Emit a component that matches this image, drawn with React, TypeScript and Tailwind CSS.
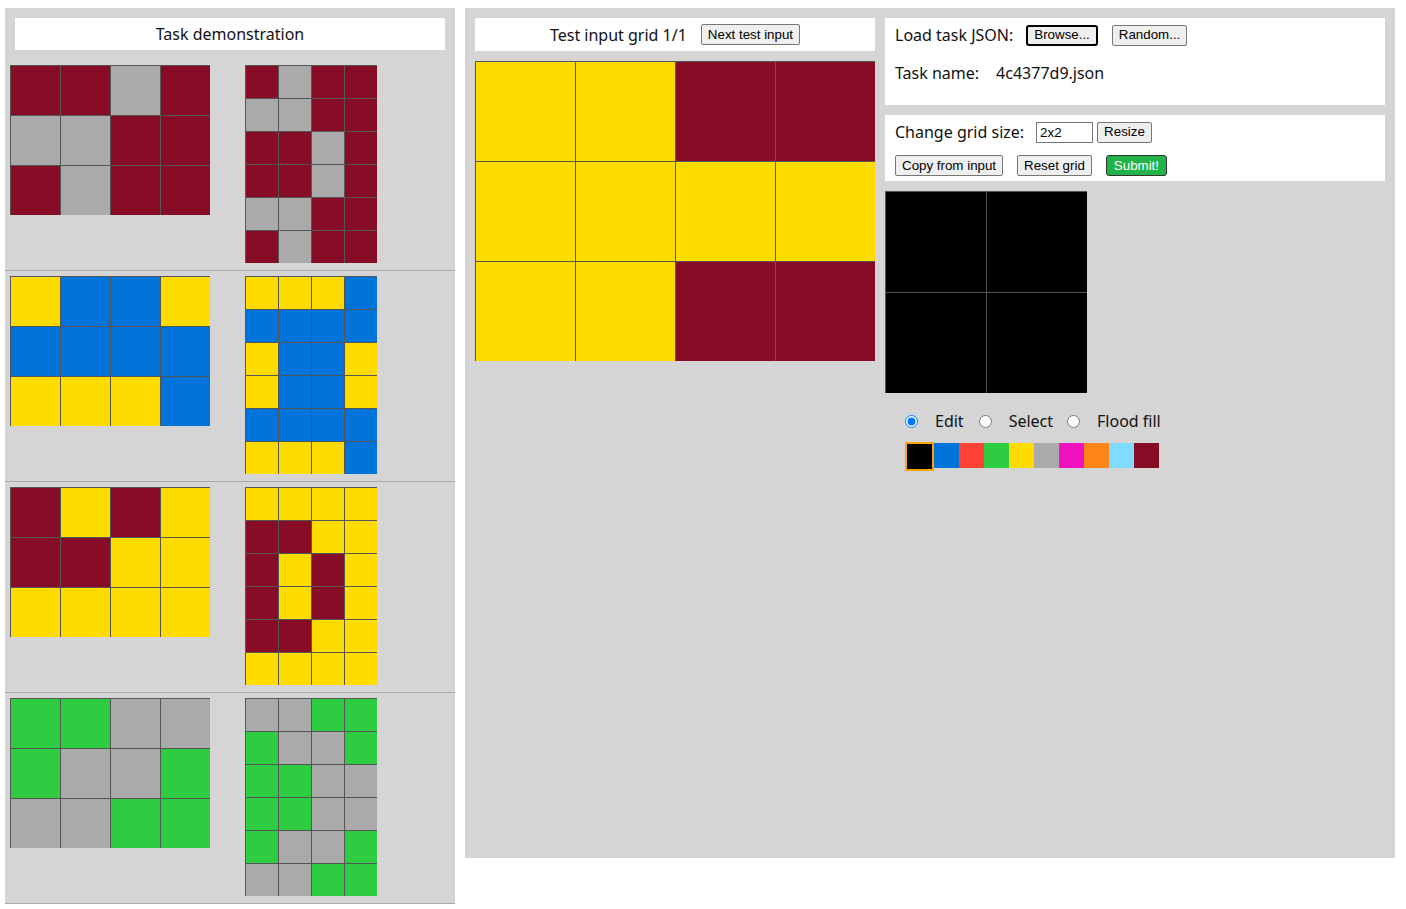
import React from "react";

const C: Record<string, string> = {
  K: "#000000",
  B: "#0074D9",
  R: "#FF4136",
  G: "#2ECC40",
  Y: "#FFDC00",
  A: "#AAAAAA",
  P: "#F012BE",
  O: "#FF851B",
  L: "#7FDBFF",
  M: "#870C25",
};

function flipThen(rows: string[]): string[] {
  return [...rows].reverse().concat(rows);
}

const demo: string[][] = [
  ["MMAM", "AAMM", "MAMM"],
  ["YBBY", "BBBB", "YYYB"],
  ["MYMY", "MMYY", "YYYY"],
  ["GGAA", "GAAG", "AAGG"],
];

function Grid({ rows, size }: { rows: string[]; size: number }) {
  return (
    <div className="flex flex-col">
      {rows.map((row, i) => (
        <div key={i} className="flex">
          {row.split("").map((c, j) => (
            <div
              key={j}
              className="box-border border-l border-t border-[#555555]"
              style={{ width: size, height: size, backgroundColor: C[c] }}
            />
          ))}
        </div>
      ))}
    </div>
  );
}

const btnFont = { fontFamily: '"Liberation Sans", Arial, sans-serif' };
const btn =
  "h-[21px] px-[6px] bg-[#efefef] border border-[#767676] rounded-[2px] text-[13.333px] leading-none text-black flex items-center";

export default function App() {
  return (
    <div
      className="flex items-start gap-[10px] pt-[8px] pl-[5px] bg-white min-h-[909px] text-[#111]"
      style={{ fontFamily: '"Noto Sans", sans-serif' }}
    >
      {/* Left panel */}
      <div className="w-[450px] bg-[#d5d5d5] pt-[10px] flex flex-col">
        <div className="mx-[10px] h-[32px] bg-white flex items-center justify-center text-[16px]">
          Task demonstration
        </div>
        <div className="mt-[10px] flex flex-col">
          {demo.map((inp, i) => (
            <div
              key={i}
              className="flex items-start pl-[5px] pt-[5px] pb-[7px] border-b border-[#aaaaaa] h-[211px] box-border"
            >
              <div className="w-[235px]">
                <Grid rows={inp} size={50} />
              </div>
              <Grid rows={flipThen(inp)} size={33} />
            </div>
          ))}
        </div>
      </div>

      {/* Right panel */}
      <div className="w-[930px] h-[850px] bg-[#d5d5d5] p-[10px] flex gap-[10px] items-start">
        <div className="w-[400px] flex flex-col gap-[10px]">
          <div className="h-[33px] bg-white flex items-center justify-center text-[16px]">
            <span>Test input grid 1/1</span>
            <button className={btn + " ml-[14px]"} style={btnFont}>
              Next test input
            </button>
          </div>
          <Grid rows={["YYMM", "YYYY", "YYMM"]} size={100} />
        </div>

        <div className="w-[500px] flex flex-col">
          <div className="h-[87px] bg-white pl-[10px] flex flex-col text-[16px]">
            <div className="flex items-center h-[24px] mt-[5px]">
              <span>Load task JSON:</span>
              <button
                className="ml-[13px] h-[21px] px-[6px] bg-[#efefef] border-2 border-black rounded-[3px] text-[13.333px] leading-none text-black flex items-center"
                style={btnFont}
              >
                Browse...
              </button>
              <button className={btn + " ml-[14px]"} style={btnFont}>
                Random...
              </button>
            </div>
            <div className="flex items-center h-[24px] mt-[14px]">
              <span>Task name:</span>
              <span className="ml-[17px]">4c4377d9.json</span>
            </div>
          </div>

          <div className="mt-[10px] h-[66px] bg-white pl-[10px] flex flex-col text-[16px]">
            <div className="flex items-center h-[24px] mt-[5px]">
              <span>Change grid size:</span>
              <input
                defaultValue="2x2"
                className="ml-[12px] w-[57px] h-[21px] border border-[#767676] px-[3px] text-[13.333px] text-black bg-white outline-none"
                style={btnFont}
              />
              <button className={btn + " ml-[4px]"} style={btnFont}>
                Resize
              </button>
            </div>
            <div className="flex items-center h-[21px] mt-[11px]">
              <button className={btn} style={btnFont}>
                Copy from input
              </button>
              <button className={btn + " ml-[14px]"} style={btnFont}>
                Reset grid
              </button>
              <button
                className="ml-[14px] h-[21px] px-[7px] bg-[#21b248] border border-[#333333] rounded-[3px] text-[13.333px] leading-none text-white flex items-center"
                style={btnFont}
              >
                Submit!
              </button>
            </div>
          </div>

          <div className="mt-[10px]">
            <Grid rows={["KK", "KK"]} size={101} />
          </div>

          <div className="mt-[20px] pl-[20px] flex items-center h-[16px] text-[16px]">
            <input type="radio" name="mode" defaultChecked className="m-0 w-[13px] h-[13px]" />
            <span className="ml-[17px]">Edit</span>
            <input type="radio" name="mode" className="ml-[15px] m-0 w-[13px] h-[13px]" />
            <span className="ml-[17px]">Select</span>
            <input type="radio" name="mode" className="ml-[14px] m-0 w-[13px] h-[13px]" />
            <span className="ml-[17px]">Flood fill</span>
          </div>

          <div className="mt-[13px] pl-[20px] flex items-start">
            <div className="w-[29px] h-[29px] border-[2px] border-[#FFA500] bg-black box-border" />
            {["B", "R", "G", "Y", "A", "P", "O", "L", "M"].map((c) => (
              <div
                key={c}
                className="w-[25px] h-[25px] mt-[1px]"
                style={{ backgroundColor: C[c] }}
              />
            ))}
          </div>
        </div>
      </div>
    </div>
  );
}
